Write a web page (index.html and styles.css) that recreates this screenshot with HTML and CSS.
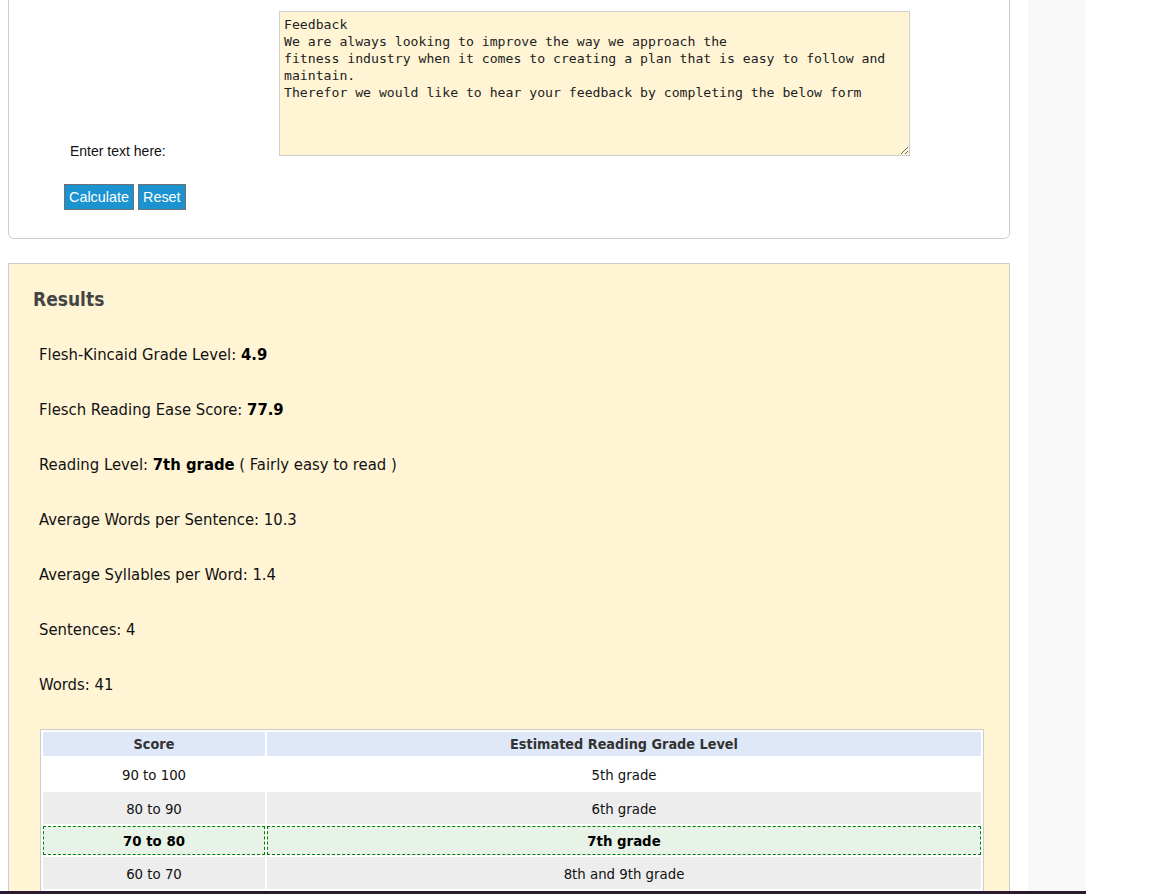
FILE: index.html
```html
<!DOCTYPE html>
<html lang="en">
<head>
<meta charset="utf-8">
<title>Readability Calculator</title>
<link rel="stylesheet" href="styles.css">
</head>
<body>
<div class="page">
  <main class="main">
    <section class="form-card">
      <div class="form-row">
        <label class="form-label" for="txt">Enter text here:</label>
        <textarea id="txt" class="text-input" spellcheck="false">Feedback
We are always looking to improve the way we approach the 
fitness industry when it comes to creating a plan that is easy to follow and maintain.
Therefor we would like to hear your feedback by completing the below form</textarea>
      </div>
      <div class="actions">
        <button class="btn" type="button">Calculate</button>
        <button class="btn" type="button">Reset</button>
      </div>
    </section>

    <section class="results">
      <h2 class="results-title">Results</h2>
      <p class="stat">Flesh-Kincaid Grade Level: <b>4.9</b></p>
      <p class="stat">Flesch Reading Ease Score: <b>77.9</b></p>
      <p class="stat">Reading Level: <b>7th grade</b> ( Fairly easy to read )</p>
      <p class="stat">Average Words per Sentence: 10.3</p>
      <p class="stat">Average Syllables per Word: 1.4</p>
      <p class="stat">Sentences: 4</p>
      <p class="stat">Words: 41</p>

      <table class="grade-table">
        <thead>
          <tr><th class="col-score">Score</th><th>Estimated Reading Grade Level</th></tr>
        </thead>
        <tbody>
          <tr><td>90 to 100</td><td>5th grade</td></tr>
          <tr class="alt"><td>80 to 90</td><td>6th grade</td></tr>
          <tr class="current"><td>70 to 80</td><td>7th grade</td></tr>
          <tr class="alt"><td>60 to 70</td><td>8th and 9th grade</td></tr>
          <tr><td>50 to 60</td><td>10th to 12th grade</td></tr>
        </tbody>
      </table>
    </section>
  </main>
  <aside class="sidebar"></aside>
</div>
<div class="bottom-bar"></div>
</body>
</html>
```

FILE: styles.css
```css
html, body {
  margin: 0;
  padding: 0;
  background: #ffffff;
  overflow: hidden;
}

body {
  font-family: "DejaVu Sans Condensed", "DejaVu Sans", sans-serif;
  font-stretch: condensed;
  color: #111;
}

.page {
  display: flex;
  width: 1086px;
  min-height: 100vh;
}

.main {
  width: 1002px;
  padding: 0 18px 0 8px;
  flex: none;
}

.sidebar {
  width: 58px;
  flex: none;
  background: #f8f8f8;
}

/* Form card */
.form-card {
  margin-top: -20px;
  border: 1px solid #cccccc;
  border-radius: 6px;
  padding: 30px 0 28px 55px;
}

.form-row {
  display: flex;
  align-items: flex-end;
}

.form-label {
  width: 209px;
  margin-left: 6px;
  margin-bottom: -3px;
  font-family: "Liberation Sans", Arial, sans-serif;
  font-size: 14px;
  line-height: 16px;
  color: #111;
}

.text-input {
  display: block;
  box-sizing: border-box;
  width: 631px;
  height: 145px;
  margin: 0;
  padding: 4px 4px 3px;
  border: 1px solid #cfcfcf;
  background: #fff5d5;
  font-family: "DejaVu Sans Mono", monospace;
  font-size: 13.15px;
  line-height: 17px;
  color: #222;
  resize: both;
  outline: none;
}

.actions {
  display: flex;
  gap: 4px;
  margin-top: 28px;
}

.btn {
  height: 26px;
  margin: 0;
  padding: 0 4px;
  border: 1px solid #707070;
  border-radius: 0;
  background: #1b93d1;
  color: #ffffff;
  font-family: "Liberation Sans", Arial, sans-serif;
  font-size: 14.4px;
  cursor: pointer;
}

/* Results */
.results {
  margin-top: 24px;
  border: 1px solid #cccccc;
  border-bottom: none;
  background: #fff5d5;
  padding: 25px 24px 40px 24px;
}

.results-title {
  margin: 0 0 34px;
  font-size: 19px;
  line-height: 21px;
  font-weight: bold;
  color: #444444;
}

.stat {
  margin: 0 0 34px 6px;
  font-size: 16.5px;
  line-height: 21px;
  color: #111;
}

.stat b {
  color: #000;
}

.grade-table {
  width: 944px;
  margin-left: 7px;
  margin-top: 0.5px;
  border: 1px solid #cccccc;
  border-spacing: 2px;
  background: #ffffff;
  font-size: 14.8px;
  text-align: center;
  color: #111;
}

.grade-table th {
  background: #dfe8f8;
  color: #333;
  font-size: 14.3px;
  font-weight: bold;
  padding: 3px 4px;
  line-height: 18px;
}

.grade-table .col-score {
  width: 214px;
}

.grade-table td {
  padding: 7.5px 4px;
  line-height: 17px;
}

.grade-table tr.alt td {
  background: #ededed;
}

.grade-table tr.current td {
  background: #e8f3e8;
  border: 1px dashed #008000;
  padding: 5px 4px;
  font-weight: bold;
  color: #000;
}

.bottom-bar {
  position: fixed;
  left: 0;
  bottom: 0;
  width: 1086px;
  height: 3px;
  background: #2b1a2d;
}
```
